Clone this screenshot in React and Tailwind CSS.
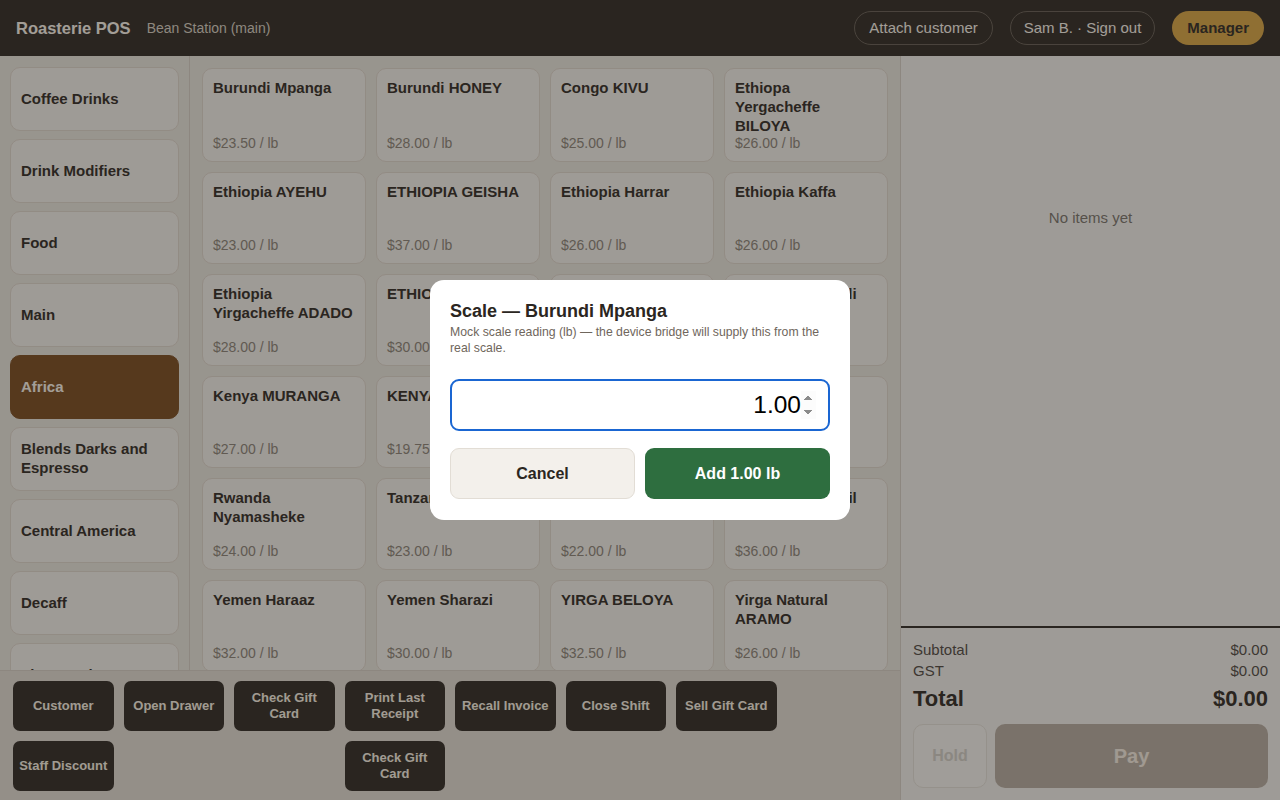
import { useState } from 'react';

const categories = [
  'Coffee Drinks',
  'Drink Modifiers',
  'Food',
  'Main',
  'Africa',
  'Blends Darks and Espresso',
  'Central America',
  'Decaff',
  'Flavoured',
];

const products = [
  { name: 'Burundi Mpanga', price: '23.50' },
  { name: 'Burundi HONEY', price: '28.00' },
  { name: 'Congo KIVU', price: '25.00' },
  { name: 'Ethiopa Yergacheffe BILOYA', price: '26.00' },
  { name: 'Ethiopia AYEHU', price: '23.00' },
  { name: 'ETHIOPIA GEISHA', price: '37.00' },
  { name: 'Ethiopia Harrar', price: '26.00' },
  { name: 'Ethiopia Kaffa', price: '26.00' },
  { name: 'Ethiopia Yirgacheffe ADADO', price: '28.00' },
  { name: 'ETHIOPIA KONGA', price: '30.00' },
  { name: 'Ethiopia Sidamo', price: '27.00' },
  { name: 'Ethiopia Hambeli', price: '29.00' },
  { name: 'Kenya MURANGA', price: '27.00' },
  { name: 'KENYA AA+', price: '19.75' },
  { name: 'Kenya Kiambu', price: '31.00' },
  { name: 'Malawi Mzuzu', price: '25.00' },
  { name: 'Rwanda Nyamasheke', price: '24.00' },
  { name: 'Tanzania Peaberry', price: '23.00' },
  { name: 'Uganda Bugisu', price: '22.00' },
  { name: 'Kenya Nyeri Trail', price: '36.00' },
  { name: 'Yemen Haraaz', price: '32.00' },
  { name: 'Yemen Sharazi', price: '30.00' },
  { name: 'YIRGA BELOYA', price: '32.50' },
  { name: 'Yirga Natural ARAMO', price: '26.00' },
];

const actions = [
  { label: 'Customer' },
  { label: 'Open Drawer' },
  { label: 'Check Gift Card' },
  { label: 'Print Last Receipt' },
  { label: 'Recall Invoice' },
  { label: 'Close Shift' },
  { label: 'Sell Gift Card' },
  { label: 'Staff Discount' },
  { label: 'Check Gift Card', col: 'col-start-4' },
];

function ScaleDialog({ product, onCancel }) {
  const [weight, setWeight] = useState('1.00');
  const shown = Number(weight || 0).toFixed(2);

  return (
    <div className="absolute inset-0 bg-[#2b2621]/40 flex items-center justify-center">
      <div className="w-[420px] bg-white rounded-[14px] px-5 pt-5 pb-[21px]">
        <h2 className="text-[18px] leading-[22px] font-bold text-[#2b2621]">Scale — {product}</h2>
        <p className="mt-0.5 text-[12.25px] leading-4 text-[#6f665c]">
          Mock scale reading (lb) — the device bridge will supply this from the real scale.
        </p>
        <input
          type="number"
          step="0.01"
          autoFocus
          value={weight}
          onChange={(e) => setWeight(e.target.value)}
          className="mt-[23px] w-full h-[52px] px-3 text-right text-[24.5px] text-black border-2 border-[#1a66d2] rounded-[9px] outline-none"
        />
        <div className="mt-[17px] grid grid-cols-2 gap-2.5">
          <button
            onClick={onCancel}
            className="h-[51px] rounded-[9px] bg-[#f3f0eb] border border-[#e2ddd5] text-[16px] font-bold text-[#2b2621]"
          >
            Cancel
          </button>
          <button className="h-[51px] rounded-[9px] bg-[#2e6e3f] text-[16px] font-bold text-white">
            Add {shown} lb
          </button>
        </div>
      </div>
    </div>
  );
}

export default function App() {
  const [active, setActive] = useState('Africa');
  const [dialog, setDialog] = useState('Burundi Mpanga');

  return (
    <div className="relative h-screen w-screen overflow-hidden flex flex-col font-['Liberation_Sans',Arial,sans-serif] text-[#2b2621]">
      <header className="h-14 shrink-0 bg-[#2b2621] flex items-center px-4">
        <span className="text-[16.5px] font-bold text-[#f3eee6]">Roasterie POS</span>
        <span className="ml-4 text-[14px] text-[#d0c9be]">Bean Station (main)</span>
        <div className="ml-auto flex items-center gap-[17px]">
          <button className="h-[34px] px-[14px] rounded-full border border-[#5f5850] text-[15px] text-[#f3eee6]">
            Attach customer
          </button>
          <button className="h-[34px] px-[13px] rounded-full border border-[#5f5850] text-[15px] text-[#f3eee6]">
            Sam B. · Sign out
          </button>
          <button className="h-[34px] px-[15px] rounded-full bg-[#d2a040] text-[15px] font-bold text-[#2b2621]">
            Manager
          </button>
        </div>
      </header>

      <div className="flex flex-1 min-h-0">
        <div className="w-[900px] flex flex-col">
          <div className="flex flex-1 min-h-0 bg-[#e2dfd8]">
            <nav className="w-[190px] shrink-0 border-r border-[#cfc9c0] px-2.5 pt-[11px] flex flex-col gap-2 overflow-hidden">
              {categories.map((c) => (
                <button
                  key={c}
                  onClick={() => setActive(c)}
                  className={
                    c === active
                      ? 'shrink-0 h-16 rounded-[10px] bg-[#74471c] border border-[#74471c] px-[10px] pb-0.5 text-left text-[15px] leading-[19px] font-bold text-[#f3eee6]'
                      : 'shrink-0 h-16 rounded-[10px] bg-[#ebe9e4] border border-[#d8d0c6] px-[10px] pb-0.5 text-left text-[15px] leading-[19px] font-bold text-[#2b2621]'
                  }
                >
                  {c}
                </button>
              ))}
            </nav>
            <div className="flex-1 px-3 pt-3 overflow-hidden">
              <div className="grid grid-cols-4 gap-2.5">
                {products.map((p) => (
                  <button
                    key={p.name}
                    onClick={() => setDialog(p.name)}
                    className="min-h-[92px] rounded-[10px] bg-[#ebe9e4] border border-[#d8d0c6] px-[10px] py-[9px] flex flex-col text-left"
                  >
                    <span className="text-[15px] leading-[19px] font-bold text-[#2b2621]">{p.name}</span>
                    <span className="mt-auto text-[14px] leading-[17px] text-[#857d73]">${p.price} / lb</span>
                  </button>
                ))}
              </div>
            </div>
          </div>
          <div className="h-[130px] shrink-0 bg-[#dad5ce] border-t border-[#cfc9c0] pl-[13px] pt-2.5">
            <div className="grid grid-cols-[repeat(7,100.5px)] gap-2.5">
              {actions.map((a, i) => (
                <button
                  key={i}
                  className={`${a.col || ''} h-[50px] rounded-[7px] bg-[#2b2621] px-1 text-[13px] leading-4 font-bold text-[#f0eadf]`}
                >
                  {a.label}
                </button>
              ))}
            </div>
          </div>
        </div>

        <aside className="flex-1 bg-[#ebeae7] border-l border-[#cfc9c0] flex flex-col">
          <div className="flex-1 pt-[151px] text-center text-[15px] text-[#746f67]">No items yet</div>
          <div className="border-t-2 border-[#2b2621] px-3 pt-[11px] pb-3">
            <div className="flex justify-between text-[15px] leading-[21px] text-[#4a443d]">
              <span>Subtotal</span>
              <span>$0.00</span>
            </div>
            <div className="flex justify-between text-[15px] leading-[21px] text-[#4a443d]">
              <span>GST</span>
              <span>$0.00</span>
            </div>
            <div className="mt-1 flex justify-between text-[22px] leading-[28px] font-bold text-[#2b2621]">
              <span>Total</span>
              <span>$0.00</span>
            </div>
            <div className="mt-[11px] flex gap-2">
              <button disabled className="w-[74px] h-16 rounded-[10px] border border-[#ddd9d2] bg-[#eeede9] text-[16px] font-bold text-[#cbc8c1]">
                Hold
              </button>
              <button disabled className="flex-1 h-16 rounded-[10px] bg-[#b0a69b] text-[20px] font-bold text-[#eee7dd]">
                Pay
              </button>
            </div>
          </div>
        </aside>
      </div>

      {dialog && <ScaleDialog product={dialog} onCancel={() => setDialog(null)} />}
    </div>
  );
}
